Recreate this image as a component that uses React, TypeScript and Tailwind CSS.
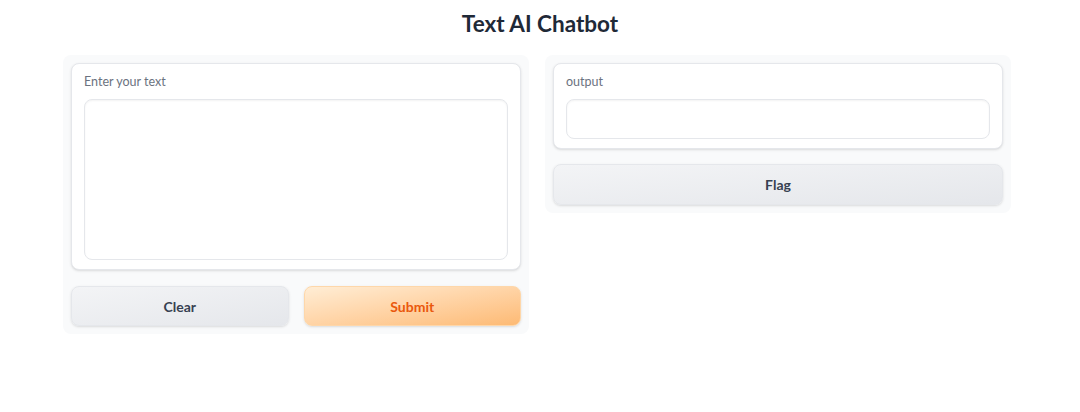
export default function App() {
  return (
    <div
      className="w-[1080px] h-[412px] bg-white text-[#1f2937]"
      style={{ fontFamily: '"Source Sans Pro", Lato, "Noto Sans", sans-serif' }}
    >
      <h1 className="pt-[10px] h-[55px] text-center text-[22.5px] font-bold leading-[28px] text-[#1f2937]">
        Text AI Chatbot
      </h1>

      <div className="flex items-start gap-4 pl-[63px] pr-[69px]">
        {/* Input column */}
        <div className="flex w-[466px] flex-col gap-4 rounded-lg bg-[#f9fafb] p-2">
          <div className="rounded-lg border border-[#e5e7eb] bg-white px-3 pt-[8px] pb-[9px] shadow-sm">
            <div className="mb-[7px] text-[12.5px] leading-[20px] text-[#6b7280]">Enter your text</div>
            <textarea className="block h-[161px] w-full resize-none rounded-lg border border-[#e5e7eb] bg-white shadow-[inset_0_1px_2px_rgba(0,0,0,0.05)] outline-none" />
          </div>
          <div className="flex gap-[15px]">
            <button className="h-10 flex-1 rounded-lg border border-[#e5e7eb] bg-gradient-to-br from-[#f3f4f6] to-[#e5e7eb] text-[14px] font-bold text-[#374151] shadow-sm">
              Clear
            </button>
            <button className="h-10 flex-1 rounded-lg border border-[#fed7aa] bg-gradient-to-br from-[#ffedd5] to-[#fdba74] text-[14px] font-bold text-[#ea580c] shadow-sm">
              Submit
            </button>
          </div>
        </div>

        {/* Output column */}
        <div className="flex w-[466px] flex-col gap-[15px] rounded-lg bg-[#f9fafb] p-2">
          <div className="rounded-lg border border-[#e5e7eb] bg-white px-3 pt-[8px] pb-[9px] shadow-sm">
            <div className="mb-[7px] text-[12.5px] leading-[20px] text-[#6b7280]">output</div>
            <div className="h-10 w-full rounded-lg border border-[#e5e7eb] bg-white shadow-[inset_0_1px_2px_rgba(0,0,0,0.05)]" />
          </div>
          <button className="h-[41px] w-full rounded-lg border border-[#e5e7eb] bg-gradient-to-br from-[#f3f4f6] to-[#e5e7eb] text-[14px] font-bold text-[#374151] shadow-sm">
            Flag
          </button>
        </div>
      </div>
    </div>
  );
}
